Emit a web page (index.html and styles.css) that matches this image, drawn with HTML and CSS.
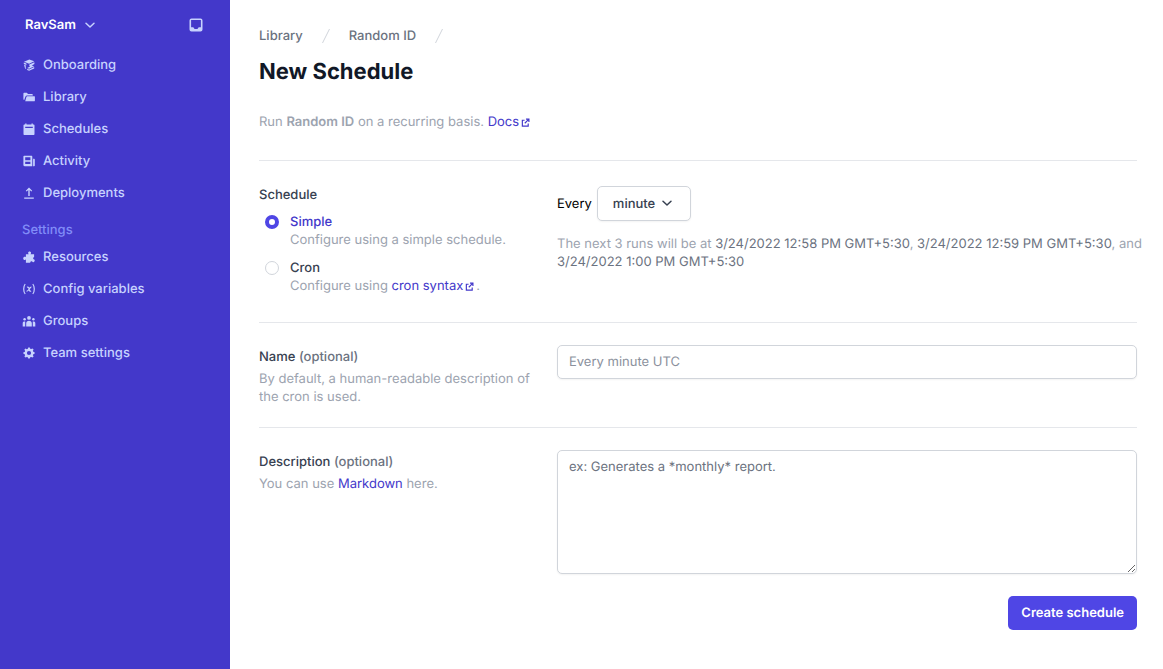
FILE: index.html
```html
<!DOCTYPE html>
<html lang="en">
<head>
<meta charset="utf-8">
<meta name="viewport" content="width=device-width, initial-scale=1">
<title>New Schedule</title>
<link rel="stylesheet" href="styles.css">
</head>
<body>
<div class="app">
  <aside class="sidebar">
    <div class="team-bar">
      <button class="team-button" type="button">RavSam
        <svg class="chevron" viewBox="0 0 12 12" aria-hidden="true"><path d="M2 4.200 6 8l4-3.800"/></svg>
      </button>
      <button class="inbox-button" type="button" aria-label="Inbox">
        <svg viewBox="0 0 14 14" aria-hidden="true"><path fill-rule="evenodd" d="M2.500.5h9a2 2 0 0 1 2 2v9a2 2 0 0 1-2 2h-9a2 2 0 0 1-2-2v-9a2 2 0 0 1 2-2Zm-.4 1.600v7.200h2.200L5.600 10.900h2.800L9.700 9.300h2.200V2.100Z"/></svg>
      </button>
    </div>
    <nav class="nav">
      <a class="nav-link" href="#"><svg viewBox="0 0 12 12" aria-hidden="true"><path d="M1 2.700 6.300.5l5 1.800-5.200 2.400ZM.8 3.600l2.600 1v1.300L.8 4.900ZM6.300 5.500l5.100-2.300v1.900L8.700 6.400l2.500.8L6.100 9.700 4.300 8.900l3-1.600-1-.4ZM1 5.800l2.300.9-.8 1 .8 2.500L2 9.300ZM4.200 9.800l1.900.8 5.100-2.500v1.300L6.100 11.800l-1.900-.8Z"/></svg>Onboarding</a>
      <a class="nav-link" href="#"><svg viewBox="0 0 12 12" aria-hidden="true"><path d="M.4 2.700c0-.6.4-1 1-1h2.400l1.200 1.200h3.800c.6 0 1 .4 1 1v.6H4.100c-.8 0-1.400.4-1.700 1.200L1.200 9C.7 9 .4 8.600.4 8.100Z"/><path d="M4.200 5.300h7.200c.4 0 .6.3.5.7v3.400c0 .5-.4.9-.9.9H2.200L3.400 6c.1-.4.4-.7.8-.7Z"/></svg>Library</a>
      <a class="nav-link" href="#"><svg viewBox="0 0 12 12" aria-hidden="true"><path fill-rule="evenodd" d="M2.200.5h1.300v1h5v-1h1.300v1h.7c.6 0 1 .4 1 1V11c0 .6-.4 1-1 1h-9c-.6 0-1-.4-1-1V2.500c0-.6.400-1 1-1h.7Zm0 3.300v1.200h7.600V3.800Z"/></svg>Schedules</a>
      <a class="nav-link" href="#"><svg viewBox="0 0 12 12" aria-hidden="true"><path fill-rule="evenodd" d="M1.500.7h6.800c.6 0 1 .4 1 1v9.600H1.600c-.7 0-1.200-.5-1.200-1.200V1.700c0-.6.400-1 1.100-1ZM2.200 2.300v2.900h5.200V2.300Zm0 4.500v2.300h5.200V6.800Z"/><path d="M10.100 3.700h.7c.6 0 1 .4 1 1v5.500c0 .6-.4 1-1 1h-.7Z"/></svg>Activity</a>
      <a class="nav-link" href="#"><svg viewBox="0 0 12 12" aria-hidden="true"><path d="M6 .5 9.200 3.700l-.8.800-1.700-1.600V9H5.300V2.900L3.600 4.500l-.8-.8ZM1.200 10.600h9.600v1.200H1.200Z"/></svg>Deployments</a>
      <h2 class="nav-heading">Settings</h2>
      <a class="nav-link" href="#"><svg viewBox="0 0 12 12" aria-hidden="true"><path d="M2.900 3.200h2.800c-1.300-1.600-.1-3 1.200-2.700 1.300.3 1.500 1.600.6 2.700h3.600v2.700c-1.300.3-1.200 2.300 0 2.500.7.300.8.900.4 1.800-.3.800-.8 1.200-1.600 1.100-.9-1.500-2.600-1.200-2.700.5H2.900V8.500C1.600 9.400.2 8.700.2 7.400s1.400-2.100 2.700-1.300Z"/></svg>Resources</a>
      <a class="nav-link" href="#"><svg class="stroke-icon" viewBox="0 0 12 12" aria-hidden="true"><path d="M2.200 1C.2 3.500.2 8.500 2.200 11M9.800 1c2 2.500 2 7.500 0 10M4 4.200c1.500-.6 1.900.6 2.100 2 .2 1.500.7 2.500 2 1.800M8.400 4.100C6.600 3.700 5.700 8.600 3.600 8.100"/></svg>Config variables</a>
      <a class="nav-link" href="#"><svg viewBox="0 0 12 12" aria-hidden="true"><circle cx="6" cy="2.900" r="1.900"/><circle cx="1.600" cy="4.200" r="1.200"/><circle cx="10.400" cy="4.200" r="1.200"/><path d="M3.200 11.600V8.200c0-1.500 1.200-2.500 2.800-2.500S8.800 6.700 8.800 8.200v3.400ZM-.3 11.400V8.200C-.3 7 .7 6.300 2.200 6.600v4.800ZM12.300 11.400V8.200c0-1.200-1-1.900-2.500-1.600v4.800Z"/></svg>Groups</a>
      <a class="nav-link" href="#"><svg viewBox="0 0 12 12" aria-hidden="true"><path fill-rule="evenodd" d="m5.200.4-.4 1.400-1 .4-1.400-.7-1 1.100.7 1.300-.4 1-1.300.3v1.600l1.300.4.4 1-.7 1.300 1.100 1.100 1.300-.7 1 .4.400 1.300h1.600l.4-1.300 1-.4 1.300.7 1.100-1.100-.7-1.300.4-1 1.300-.4V5.200l-1.300-.4-.4-1 .7-1.300-1.100-1.100-1.300.7-1-.4L6.800.4ZM6 3.900a2.100 2.100 0 1 1 0 4.200 2.100 2.100 0 0 1 0-4.200Z"/></svg>Team settings</a>
    </nav>
  </aside>

  <main class="main">
    <nav class="breadcrumbs" aria-label="Breadcrumb">
      <a href="#">Library</a>
      <svg viewBox="0 0 18 18" aria-hidden="true"><path d="M5.500 16 12.500 2"/></svg>
      <a href="#">Random ID</a>
      <svg viewBox="0 0 18 18" aria-hidden="true"><path d="M5.500 16 12.500 2"/></svg>
    </nav>
    <h1 class="title">New Schedule</h1>
    <p class="intro">Run <strong>Random ID</strong> on a recurring basis. <a class="link" href="#">Docs<svg class="external" viewBox="0 0 10 10" aria-hidden="true"><path d="M4 2.500H1.500v6.500H8V6.200M5.500 1.200h3.300v3.300M8.800 1.200 4.200 5.800"/></svg></a></p>

    <form class="form">
      <fieldset class="section schedule">
        <div class="section-info">
          <legend class="label">Schedule</legend>
          <div class="option">
            <input class="radio" type="radio" name="mode" id="simple" checked>
            <div>
              <label class="option-name" for="simple">Simple</label>
              <p class="hint">Configure using a simple schedule.</p>
            </div>
          </div>
          <div class="option">
            <input class="radio" type="radio" name="mode" id="cron">
            <div>
              <label class="option-name" for="cron">Cron</label>
              <p class="hint">Configure using <a class="link" href="#">cron syntax<svg class="external" viewBox="0 0 10 10" aria-hidden="true"><path d="M4 2.500H1.500v6.500H8V6.200M5.500 1.200h3.300v3.300M8.800 1.200 4.200 5.800"/></svg></a>.</p>
            </div>
          </div>
        </div>
        <div class="section-field">
          <div class="every">
            <label for="interval">Every</label>
            <span class="select-wrap">
              <select id="interval"><option>minute</option><option>hour</option><option>day</option></select>
              <svg class="chevron" viewBox="0 0 12 12" aria-hidden="true"><path d="M2 4.200 6 8l4-3.800"/></svg>
            </span>
          </div>
          <p class="hint">The next 3 runs will be at <span class="time">3/24/2022 12:58 PM GMT+5:30</span>, <span class="keep"><span class="time">3/24/2022 12:59 PM GMT+5:30</span>, and</span> <span class="time">3/24/2022 1:00 PM GMT+5:30</span></p>
        </div>
      </fieldset>

      <div class="section">
        <div class="section-info">
          <label class="label" for="name">Name <span class="optional">(optional)</span></label>
          <p class="hint">By default, a human-readable description of the cron is used.</p>
        </div>
        <div class="section-field"><input class="control" id="name" type="text" placeholder="Every minute UTC"></div>
      </div>

      <div class="section">
        <div class="section-info">
          <label class="label" for="description">Description <span class="optional">(optional)</span></label>
          <p class="hint">You can use <a class="link" href="#">Markdown</a> here.</p>
        </div>
        <div class="section-field"><textarea class="control" id="description" rows="6" placeholder="ex: Generates a *monthly* report."></textarea></div>
      </div>

      <div class="actions"><button class="submit" type="submit">Create schedule</button></div>
    </form>
  </main>
</div>
</body>
</html>
```
FILE: styles.css
```css
*, *::before, *::after { box-sizing: border-box; }

body {
  margin: 0;
  background: #fff;
  color: #000;
  font: 13px/18px Inter, "Liberation Sans", sans-serif;
  text-rendering: geometricPrecision;
}

h1, h2, p, fieldset, legend { margin: 0; padding: 0; border: 0; }
a { color: inherit; text-decoration: none; }
button, input, select, textarea { font: inherit; margin: 0; text-rendering: inherit; }

.app { display: flex; min-height: 100vh; }

.sidebar {
  flex: 0 0 230px;
  background: #4338ca;
  color: #c7d2fe;
  font-weight: 500;
}

.team-bar {
  display: flex;
  justify-content: space-between;
  align-items: center;
  height: 50px;
  padding: 0 27px 0 25px;
}

.team-button, .inbox-button {
  display: flex;
  align-items: center;
  padding: 0;
  border: 0;
  background: none;
  color: #c7d2fe;
}
.team-button { gap: 8px; color: #fff; font-weight: 600; }
.team-button .chevron { color: #c7d2fe; }
.inbox-button svg { width: 14px; height: 14px; fill: currentColor; }

.chevron {
  width: 12px;
  height: 12px;
  fill: none;
  stroke: currentColor;
  stroke-width: 1.500;
  stroke-linecap: round;
  stroke-linejoin: round;
}

.nav { display: flex; flex-direction: column; padding: 0 14px; }
.nav-link {
  display: flex;
  align-items: center;
  gap: 8px;
  height: 30px;
  margin-bottom: 2px;
  padding-left: 9px;
}
.nav-link svg { width: 12px; height: 12px; fill: currentColor; overflow: visible; }
.nav-link .stroke-icon { fill: none; stroke: currentColor; stroke-width: 1.200; }
.nav-heading {
  margin: 11px 0 3px;
  padding-left: 8px;
  color: #818cf8;
  font-size: 13px;
  font-weight: 500;
}

.main { flex: 1; min-width: 0; padding: 27px 26px 39px 29px; }

.breadcrumbs {
  display: flex;
  align-items: center;
  gap: 14px;
  color: #6b7280;
  font-weight: 500;
}
.breadcrumbs svg { width: 18px; height: 18px; fill: none; stroke: #d1d5db; }

.title {
  margin-top: 13px;
  color: #111827;
  font-size: 22px;
  line-height: 28px;
  font-weight: 700;
}

.intro { margin-top: 27px; color: #9ca3af; }
.intro strong { font-weight: 600; }
.link { color: #4338ca; }

.external {
  width: 9px;
  height: 9px;
  margin: 0 2px;
  fill: none;
  stroke: currentColor;
  stroke-width: 1.300;
  vertical-align: -1px;
}

.form { margin-top: 29px; }

.section {
  display: grid;
  grid-template-columns: repeat(3, minmax(0, 1fr));
  gap: 16px;
  min-width: 0;
  padding: 22px 0 21px;
  border-top: 1px solid #e5e7eb;
}
.section-field { grid-column: span 2; }

.label { display: block; margin: 3px 0 4px; color: #374151; font-weight: 500; }
.optional { color: #6b7280; }
.hint { color: #9ca3af; }

.schedule { padding: 25px 0 27px; }
.schedule .label { margin: 0; }
.option { display: flex; gap: 11px; margin-top: 10px; padding-left: 6px; }
.label + .option { margin-top: 9px; }
.option-name { display: block; color: #374151; font-weight: 500; }
.radio {
  flex: none;
  appearance: none;
  width: 14px;
  height: 14px;
  margin-top: 2px;
  border: 1px solid #d1d5db;
  border-radius: 50%;
  background: #fff;
}
.radio:checked { border: 4px solid #4f46e5; }
.radio:checked + div .option-name { color: #4338ca; }

.every { display: flex; align-items: center; gap: 5px; margin-bottom: 14px; }
.select-wrap { position: relative; color: #374151; }
.select-wrap select {
  display: block;
  appearance: none;
  width: 94px;
  height: 35px;
  padding: 0 30px 0 15px;
  border: 1px solid #d1d5db;
  border-radius: 5px;
  background: #fff;
  box-shadow: 0 1px 2px rgba(0, 0, 0, .05);
  color: inherit;
  font-weight: 500;
}
.select-wrap .chevron { position: absolute; top: 11px; right: 18px; pointer-events: none; }
.time { color: #6b7280; }

@media (min-width: 1100px) {
  .schedule .section-field .hint { margin-right: -8px; }
  .keep { white-space: nowrap; }
}

.control {
  display: block;
  width: 100%;
  padding: 7px 11px;
  border: 1px solid #d1d5db;
  border-radius: 5px;
  background: #fff;
  box-shadow: 0 1px 2px rgba(0, 0, 0, .05);
  color: #111827;
}
.control::placeholder { color: #8b919d; opacity: 1; }
textarea.control { resize: vertical; }
textarea.control::placeholder { color: #6b7280; }

.actions { display: flex; justify-content: flex-end; margin-top: 1px; }
.submit {
  padding: 8px 13px;
  border: 0;
  border-radius: 5px;
  background: #4f46e5;
  color: #fff;
  font-weight: 600;
}
```
